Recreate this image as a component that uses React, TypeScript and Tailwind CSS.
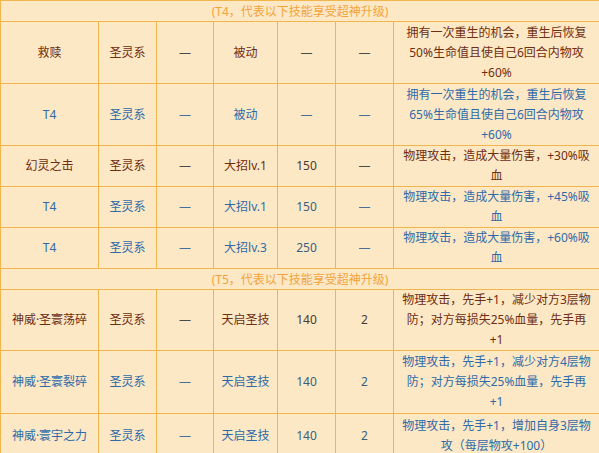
import React from 'react';

type Row = {
  tone: 'brown' | 'blue';
  name: string;
  kind: string;
  a: string;
  type: string;
  pp: string;
  cd: string;
  desc: string[];
  h: string;
};

const rowsT4: Row[] = [
  { tone: 'brown', name: '救赎', kind: '圣灵系', a: '—', type: '被动', pp: '—', cd: '—', desc: ['拥有一次重生的机会，重生后恢复', '50%生命值且使自己6回合内物攻', '+60%'], h: 'h-[62px]' },
  { tone: 'blue', name: 'T4', kind: '圣灵系', a: '—', type: '被动', pp: '—', cd: '—', desc: ['拥有一次重生的机会，重生后恢复', '65%生命值且使自己6回合内物攻', '+60%'], h: 'h-[62px]' },
  { tone: 'brown', name: '幻灵之击', kind: '圣灵系', a: '—', type: '大招lv.1', pp: '150', cd: '—', desc: ['物理攻击，造成大量伤害，+30%吸', '血'], h: 'h-[41px]' },
  { tone: 'blue', name: 'T4', kind: '圣灵系', a: '—', type: '大招lv.1', pp: '150', cd: '—', desc: ['物理攻击，造成大量伤害，+45%吸', '血'], h: 'h-[41px]' },
  { tone: 'blue', name: 'T4', kind: '圣灵系', a: '—', type: '大招lv.3', pp: '250', cd: '—', desc: ['物理攻击，造成大量伤害，+60%吸', '血'], h: 'h-[41px]' },
];

const rowsT5: Row[] = [
  { tone: 'brown', name: '神威·圣寰荡碎', kind: '圣灵系', a: '—', type: '天启圣技', pp: '140', cd: '2', desc: ['物理攻击，先手+1，减少对方3层物', '防；对方每损失25%血量，先手再', '+1'], h: 'h-[61px]' },
  { tone: 'blue', name: '神威·圣寰裂碎', kind: '圣灵系', a: '—', type: '天启圣技', pp: '140', cd: '2', desc: ['物理攻击，先手+1，减少对方4层物', '防；对方每损失25%血量，先手再', '+1'], h: 'h-[63px]' },
  { tone: 'blue', name: '神威·寰宇之力', kind: '圣灵系', a: '—', type: '天启圣技', pp: '140', cd: '2', desc: ['物理攻击，先手+1，增加自身3层物', '攻（每层物攻+100）'], h: 'h-[45px]' },
];

const cell = 'border border-[#f0b64c] text-center align-middle p-0';

function Header({ text }: { text: string }) {
  return (
    <tr className="h-[21px]">
      <td colSpan={7} className={`${cell} text-[#f2a33a] leading-[19px]`}>
        {text}
      </td>
    </tr>
  );
}

function SkillRow({ r }: { r: Row }) {
  const main = r.tone === 'brown' ? 'text-[#6e2e12]' : 'text-[#2f6aa8]';
  const dash = r.tone === 'brown' ? 'text-[#4a4a4a]' : 'text-[#46709a]';
  const num = r.tone === 'brown' ? 'text-[#4a3a30]' : 'text-[#38607f]';
  return (
    <tr className={r.h}>
      <td className={`${cell} ${main}`}>{r.name}</td>
      <td className={`${cell} ${main}`}>{r.kind}</td>
      <td className={`${cell} ${dash}`}>{r.a}</td>
      <td className={`${cell} ${main}`}>{r.type}</td>
      <td className={`${cell} ${r.pp === '—' ? dash : num}`}>{r.pp}</td>
      <td className={`${cell} ${r.cd === '—' ? dash : num}`}>{r.cd}</td>
      <td className={`${cell} ${main} leading-[20px]`}>
        {r.desc.map((line, i) => (
          <div key={i}>{line}</div>
        ))}
      </td>
    </tr>
  );
}

export default function App() {
  return (
    <div className="w-[599px] h-[453px] overflow-hidden bg-white">
      <table
        className="w-[599px] table-fixed border-collapse bg-[#fde8c6] text-[12px]"
        style={{ fontFamily: '"Noto Sans", "Noto Sans CJK SC", sans-serif' }}
      >
        <colgroup>
          <col className="w-[98px]" />
          <col className="w-[58px]" />
          <col className="w-[57px]" />
          <col className="w-[64px]" />
          <col className="w-[58px]" />
          <col className="w-[58px]" />
          <col className="w-[206px]" />
        </colgroup>
        <tbody>
          <Header text="(T4，代表以下技能享受超神升级)" />
          {rowsT4.map((r, i) => (
            <SkillRow key={i} r={r} />
          ))}
          <Header text="(T5，代表以下技能享受超神升级)" />
          {rowsT5.map((r, i) => (
            <SkillRow key={i} r={r} />
          ))}
        </tbody>
      </table>
    </div>
  );
}
